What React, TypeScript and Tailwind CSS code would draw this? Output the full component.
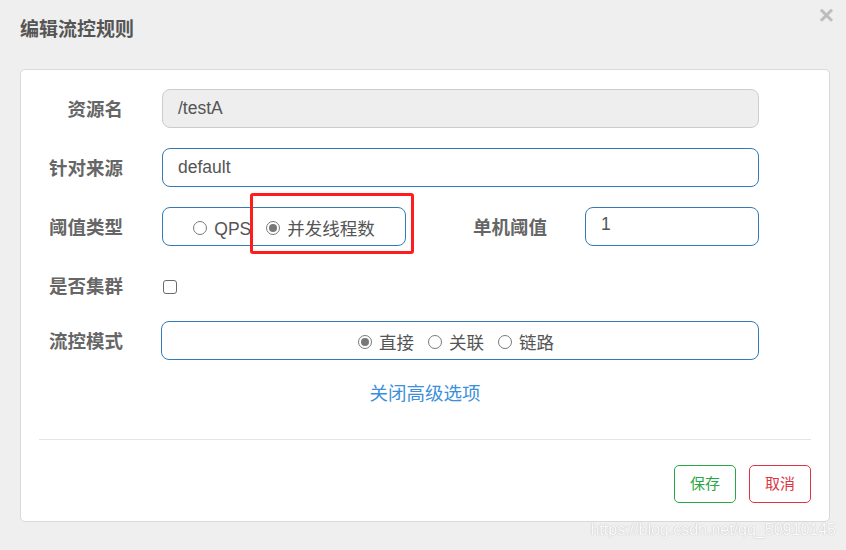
import React from 'react';

const font = { fontFamily: '"Liberation Sans", "Noto Sans CJK SC", sans-serif' };

const Radio = ({ checked = false, label }: { checked?: boolean; label: string }) => (
  <label className="flex items-center gap-[7px]">
    <span className="w-[14px] h-[14px] rounded-full border border-[#7a7a7a] bg-white flex items-center justify-center">
      {checked && <span className="w-[8px] h-[8px] rounded-full bg-[#777]" />}
    </span>
    <span className="pt-[2px] text-[17.5px] text-[#555] leading-[20px]">{label}</span>
  </label>
);

const FieldLabel = ({ children, className = '' }: { children: React.ReactNode; className?: string }) => (
  <div className={`text-right text-[18.5px] font-bold text-[#666] leading-[24px] ${className}`}>{children}</div>
);

export default function App() {
  return (
    <div className="relative w-[846px] h-[550px] bg-[#efefef] overflow-hidden" style={font}>
      {/* header */}
      <div className="flex items-start justify-between h-[69px] pl-[20px] pr-[12px]">
        <h4 className="mt-[18px] text-[19px] font-bold text-[#555] leading-[24px]">编辑流控规则</h4>
        <button className="mt-[2px] text-[26px] font-bold text-[#bdbdbd] leading-[26px]">×</button>
      </div>

      {/* card */}
      <div className="ml-[20px] w-[810px] bg-white border border-[#d9d9d9] rounded-[5px] pb-[18px]">
        <div className="pt-[19px] flex flex-col gap-[20px]">
          <div className="flex items-center h-[39px]">
            <FieldLabel className="w-[102px] mt-[3px]">资源名</FieldLabel>
            <div className="ml-[39px] w-[597px] h-[39px] rounded-[8px] border border-[#cccccc] bg-[#eeeeee] flex items-center px-[15px] text-[17.5px] text-[#555]">
              /testA
            </div>
          </div>

          <div className="flex items-center h-[39px]">
            <FieldLabel className="w-[102px] mt-[3px]">针对来源</FieldLabel>
            <div className="ml-[39px] w-[597px] h-[39px] rounded-[8px] border border-[#337ab7] bg-white flex items-center px-[15px] text-[17.5px] text-[#555]">
              default
            </div>
          </div>

          <div className="flex items-center h-[39px]">
            <FieldLabel className="w-[102px] mt-[3px]">阈值类型</FieldLabel>
            <div className="ml-[39px] w-[244px] h-[39px] rounded-[8px] border border-[#337ab7] flex items-center justify-center gap-[15px] pt-[3px]">
              <Radio label="QPS" />
              <Radio checked label="并发线程数" />
            </div>
            <FieldLabel className="w-[141px] mt-[3px]">单机阈值</FieldLabel>
            <div className="ml-[38px] w-[174px] h-[39px] rounded-[8px] border border-[#337ab7] flex items-center px-[15px] pb-[4px] text-[17.5px] text-[#555]">
              1
            </div>
          </div>

          <div className="flex items-center h-[35px]">
            <FieldLabel className="w-[102px] mt-[7px]">是否集群</FieldLabel>
            <span className="ml-[40px] mt-[7px] w-[14px] h-[14px] rounded-[3px] border border-[#6b6b6b] bg-white" />
          </div>

          <div className="flex items-center h-[39px]">
            <FieldLabel className="w-[102px] mt-[3px]">流控模式</FieldLabel>
            <div className="ml-[38px] w-[598px] h-[39px] rounded-[8px] border border-[#337ab7] flex items-center justify-center gap-[14px] pr-[8px] pt-[3px]">
              <Radio checked label="直接" />
              <Radio label="关联" />
              <Radio label="链路" />
            </div>
          </div>
        </div>

        <div className="mt-[22px] h-[24px] flex justify-center">
          <a className="text-[18.5px] text-[#3d8fd9] leading-[24px] cursor-pointer">关闭高级选项</a>
        </div>

        <div className="mx-[18px] mt-[33px] border-t border-[#e5e5e5]" />

        <div className="flex justify-end gap-[13px] pt-[25px] pr-[18px]">
          <button className="w-[62px] h-[38px] rounded-[5px] border border-[#28a745] text-[#28a745] text-[15px] bg-white">保存</button>
          <button className="w-[62px] h-[38px] rounded-[5px] border border-[#dc3545] text-[#dc3545] text-[15px] bg-white">取消</button>
        </div>
      </div>

      {/* annotation box drawn over the screenshot */}
      <div className="absolute left-[250px] top-[193px] w-[164px] h-[61px] border-[3px] border-[#ff1c1c] rounded-[3px]" />

      {/* watermark */}
      <div
        className="absolute right-[10px] top-[520px] text-[16px] text-[#fbfbfb] leading-[20px]"
        style={{ textShadow: '0 0 1px #c4c4c4, 0 0 1px #c4c4c4' }}
      >
        https://blog.csdn.net/qq_50910145
      </div>
    </div>
  );
}
